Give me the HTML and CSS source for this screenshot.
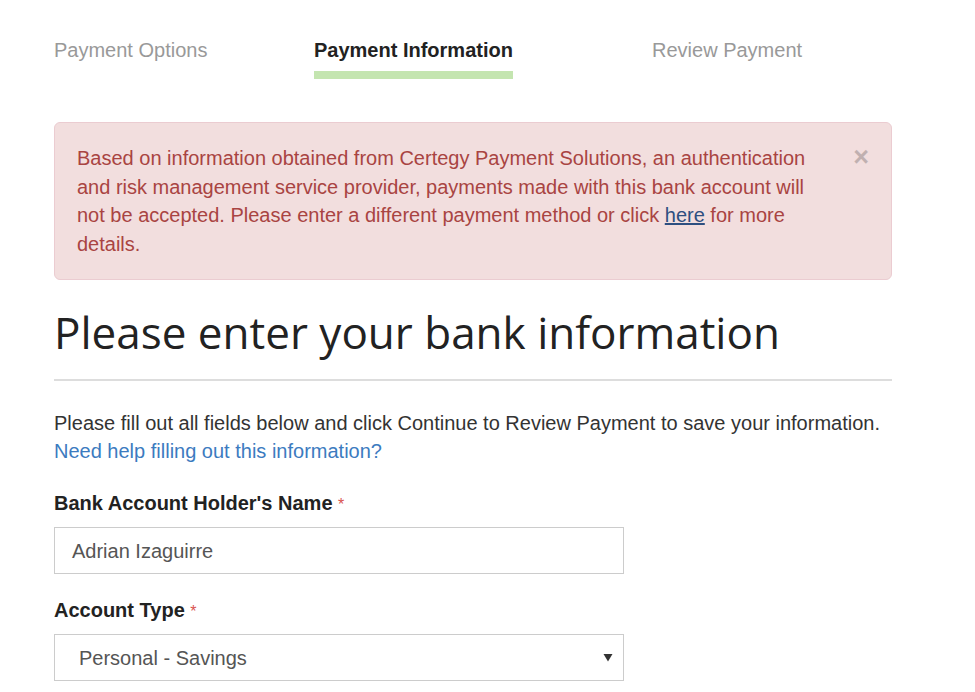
FILE: index.html
```html
<!DOCTYPE html>
<html lang="en">

<head>
    <meta charset="UTF-8">
    <meta name="viewport" content="width=device-width, initial-scale=1.0">
    <title>Payment Information</title>
    <link rel="stylesheet" href="styles.css">
</head>

<body>
    <div class="page">
        <nav class="steps">
            <span class="step">Payment Options</span>
            <span class="step active"><span class="step-label">Payment Information</span></span>
            <span class="step">Review Payment</span>
        </nav>

        <div class="alert">
            <p class="alert-text">Based on information obtained from Certegy Payment Solutions, an authentication and risk management service provider, payments made with this bank account will not be accepted. Please enter a different payment method or click <a href="#">here</a> for more details.</p>
            <button class="close" type="button">&times;</button>
        </div>

        <h1>Please enter your bank information</h1>
        <hr>

        <p class="intro">Please fill out all fields below and click Continue to Review Payment to save your information.<br>
            <a href="#" class="help">Need help filling out this information?</a></p>

        <div class="field">
            <label>Bank Account Holder's Name <span class="req">*</span></label>
            <div class="input">Adrian Izaguirre</div>
        </div>

        <div class="field">
            <label>Account Type <span class="req">*</span></label>
            <div class="input select">
                <span>Personal - Savings</span>
                <svg width="10" height="9" viewBox="0 0 10 9"><path d="M0.5 1 L9.5 1 L5 8.5 Z" fill="#333"/></svg>
            </div>
        </div>
    </div>
</body>

</html>
```

FILE: styles.css
```css
body {
    margin: 0;
    font-family: 'Liberation Sans', Arial, sans-serif;
    font-size: 20px;
    line-height: 28px;
    color: #333;
    background: #fff;
}

.page {
    width: 838px;
    padding-left: 54px;
}

.steps {
    display: grid;
    grid-template-columns: 260px 338px 1fr;
    padding-top: 36px;
    color: #999;
}

.step.active {
    color: #222;
    font-weight: bold;
}

.step-label {
    display: inline-block;
    padding-bottom: 7px;
    border-bottom: 8px solid #c4e5b0;
}

.alert {
    display: flex;
    align-items: flex-start;
    margin-top: 43px;
    padding: 21px 22px 21px 22px;
    background: #f2dede;
    border: 1px solid #ebccd1;
    border-radius: 6px;
    color: #a94442;
}

.alert-text {
    margin: 0;
    flex: 1;
    padding-right: 40px;
    line-height: 28.5px;
}

.alert-text a {
    color: #2e4f80;
}

.close {
    border: 0;
    background: none;
    padding: 0;
    margin-top: -1px;
    font-family: 'Liberation Sans', Arial, sans-serif;
    font-size: 27px;
    font-weight: bold;
    line-height: 28px;
    color: #000;
    opacity: 0.2;
}

h1 {
    margin: 28px 0 0;
    font-family: 'Open Sans', sans-serif;
    font-size: 44px;
    font-weight: normal;
    line-height: 48px;
    color: #222;
}

hr {
    margin: 23px 0 0;
    border: 0;
    border-top: 2px solid #ddd;
}

.intro {
    margin: 28px 0 0;
}

.help {
    color: #3c7bbf;
    text-decoration: none;
}

.field {
    margin-top: 24px;
}

.field + .field {
    margin-top: 22px;
}

label {
    display: block;
    font-weight: bold;
    color: #222;
}

.req {
    color: #d9534f;
    font-weight: normal;
    font-size: 16px;
}

.input {
    box-sizing: border-box;
    width: 570px;
    height: 47px;
    margin-top: 8px;
    padding: 0 17px;
    border: 1px solid #ccc;
    color: #555;
    display: flex;
    align-items: center;
}

.select {
    justify-content: space-between;
    padding: 0 10px 0 24px;
}
```
